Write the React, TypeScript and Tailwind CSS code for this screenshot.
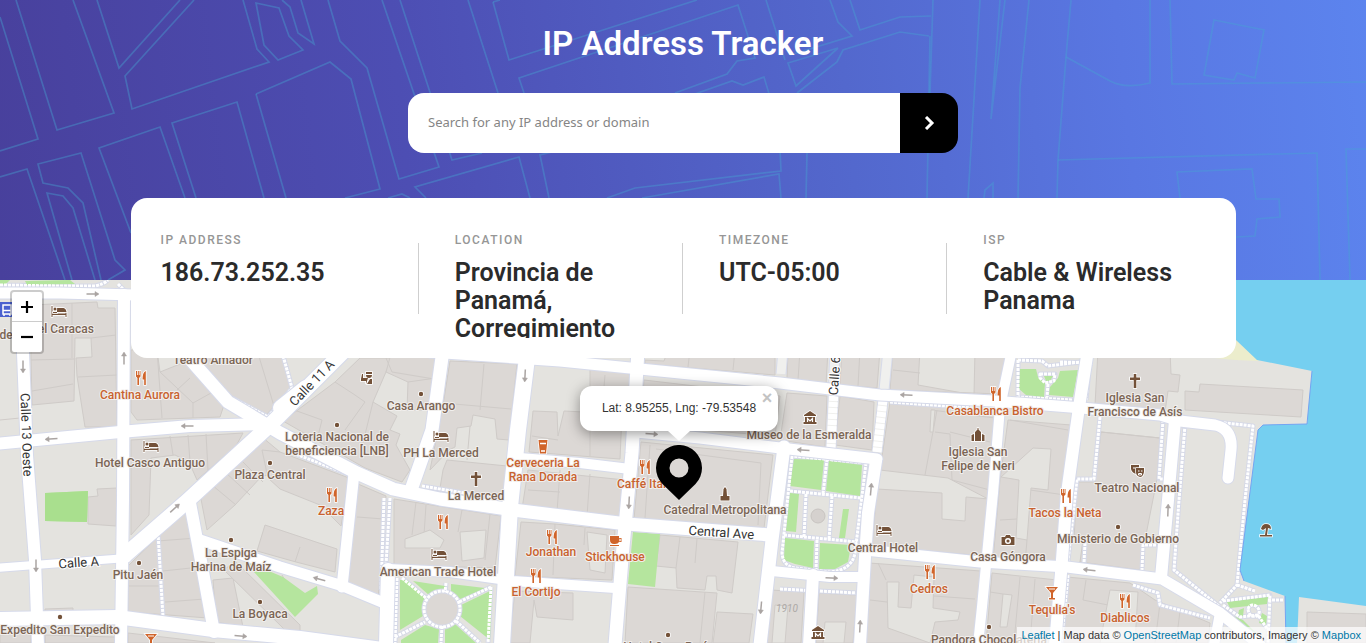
import type { ReactNode } from "react";

const STREET_PATTERN = [
  "M0,17 38,139 0,151",
  "M16,0 57,130 114,113 73,0",
  "M97,0 119,68 180,0",
  "M194,0 125,76 132,109 269,62 257,49 243,0",
  "M256,3 279,8 289,36 303,50 278,60 264,45Z",
  "M282,0 290,7 298,33 314,44 301,0",
  "M382,0 439,167 399,179 367,68 340,41 328,0",
  "M400,0 452,160 482,153",
  "M256,94 330,62 351,79 380,189 345,198",
  "M256,94 286,198",
  "M0,177 27,169 65,280",
  "M101,280 83,203 68,188 43,183 38,164 81,153 115,260 125,270 108,280",
  "M95,280 73,208 63,196 47,193 72,280",
  "M185,198 160,127 99,148 131,233",
  "M196,198 172,123 237,102 264,198",
  "M468,0 498,93",
  "M493,2 509,60 697,0",
  "M493,2 500,0",
  "M524,93 519,78 738,5 755,58 737,61 727,74 675,93",
  "M675,101 732,81 743,85 764,77 770,97",
  "M388,198 402,194 410,198",
  "M426,198 415,187 519,157 530,198",
  "M549,198 540,155 560,150",
  "M607,198 635,188 781,171 780,150",
  "M642,198 779,174 781,198",
  "M766,0 785,60",
  "M788,63 838,48 796,86Z",
  "M797,93 837,62 843,50 900,32 929,36",
  "M830,0 838,22 852,36 790,55",
  "M850,0 860,30 900,17 931,16",
  "M807,153 806,198",
  "M933,0 930,93",
  "M930,36 927,198",
  "M980,0 968,198",
  "M1000,0 991,119 1005,0",
  "M1029,0 1020,88 1018,198",
  "M1071,0 1066,57 1058,160 1057,198",
  "M1066,57 1110,81 Q1125,89 1150,83 L1150,0",
  "M1170,0 1172,84 1366,82",
  "M1214,20 1264,30 1255,78 1237,73 1234,80 1204,75Z",
  "M1058,160 1317,153 1320,280",
  "M1180,198 1177,172 1252,169 1256,199 1279,199 1280,217 1257,219 1255,236 1236,237",
  "M1366,149 1346,149 1350,280",
  "M984,198 985,190 993,183 993,198",
];

const BUILDINGS = [
  "31,305 97,302 98,308 115,308 117,427 85,427 77,376 76,358 92,357 91,338 75,338 74,401 32,405 31,360",
  "131,350 157,350 160,372 185,362 225,402 220,417 137,420 131,412",
  "199,364 205,350 282,350 292,388 265,416 228,396",
  "131,440 243,433 236,446 197,480 189,462 175,455 151,458 149,515 131,535",
  "128,566 187,508 199,560 208,618 128,612",
  "200,494 252,441 262,437 280,452 300,470 262,476 235,505 207,530",
  "265,525 337,549 335,572 296,562 257,551",
  "262,450 280,452 349,478 341,526 320,505 280,489 268,478",
  "213,580 233,578 243,627 216,622",
  "224,570 235,561 300,625 300,632 285,630",
  "88,497 98,496 97,489 117,488 116,526 88,524",
  "45,609 73,608 73,612 45,612",
  "45,635 115,637 115,643 45,643",
  "0,635 31,632 31,643 0,643",
  "128,633 215,643 128,643",
  "283,421 335,382 360,358 392,358 373,402 397,416 390,430 400,434 396,445 410,470 402,482 365,468",
  "392,350 438,358 434,410 407,410 408,382 386,372",
  "450,361 517,364 509,440 497,439 495,419 473,415 471,426 457,428 455,447 449,450 430,470 443,405",
  "447,460 507,466 503,500 440,488 443,470",
  "358,484 386,496 378,600 347,584",
  "394,499 501,516 495,568 394,565",
  "533,411 557,412 558,436 564,411 622,414 620,459 529,452",
  "528,470 625,480 622,521 522,509",
  "521,522 555,524 615,530 612,580 515,576",
  "515,591 573,593 573,620 537,617 534,600 530,643 509,643",
  "590,369 631,374 626,404 590,400",
  "644,380 780,396 775,436 640,425",
  "645,350 775,350 775,375 645,364",
  "641,442 773,455 764,528 634,519",
  "660,535 738,542 732,593 717,590 716,576 707,576 705,590 677,588 676,568 656,566",
  "628,587 717,593 712,643 625,643",
  "717,612 753,614 749,643 713,643",
  "771,590 804,592 801,643 764,643",
  "819,593 857,595 853,643 816,643",
  "788,350 828,350 826,385 787,378",
  "842,350 880,350 877,388 840,385",
  "893,350 920,350 918,385 974,395 975,350 1006,350 1000,394 890,390",
  "787,393 827,396 825,447 780,440",
  "840,396 874,402 872,450 835,445",
  "890,402 995,410 990,500 948,478 880,470",
  "877,489 942,493 942,519 965,521 966,497 989,499 984,556 872,546",
  "869,563 981,571 973,643 866,643",
  "1008,420 1071,425 1065,565 993,560 1000,480",
  "992,573 1057,580 1053,643 986,643",
  "1098,350 1170,350 1171,374 1180,375 1178,392 1168,391 1165,412 1095,405",
  "1185,391 1199,392 1200,384 1303,390 1301,417 1185,410",
  "1101,432 1160,438 1157,479 1145,540 1140,570 1080,562 1083,540 1074,540 1077,482 1095,482",
  "1067,577 1130,583 1155,600 1210,623 1208,643 1062,643",
  "1307,612 1366,614 1366,643 1307,643",
];

const COURTYARDS = [
  "405,539 430,530 444,540 440,548 405,548",
  "460,532 486,530 484,558 462,561",
  "587,532 607,535 605,573 590,570",
  "887,582 899,582 898,607 911,608 914,575 934,577 933,608 960,612 958,620 935,622 930,643 888,628",
  "1033,448 1051,449 1048,490 1031,488 1027,540 1016,538 1019,480 1001,477",
  "1003,594 1012,595 1007,627 1000,627",
  "1110,590 1138,592 1135,643 1100,643",
  "931,410 935,410 933,432 930,432",
  "775,605 788,606 785,643 772,643",
  "825,622 846,622 844,643 823,643",
  "643,350 668,350 664,361 643,360",
];

const BUILDING_EDGES =
  "M72,303V358 M31,360 74,359 M78,377 117,375 M91,338 116,335 M32,391 73,384 M157,350 162,418 M160,372 193,403 220,388 M193,403V418 M177,390 190,378 M257,350 274,406 M170,436 173,455 M188,435 190,462 M206,434 208,470 M158,541 196,538 M163,571 200,567 M128,586H163 M165,602 205,599 M212,485 236,505 M225,472 250,495 M240,459 263,482 M335,382 355,395 365,402 345,430 M373,402 360,455 M283,406 322,420 317,440 M408,382 436,378 M386,358 392,372 440,380 M484,364 480,410 M443,403 511,409 M470,426 467,460 M357,517 384,519 M426,505 424,535 M462,510 458,532 M490,514 485,560 M416,502 412,535 M532,436 558,440 M590,412V456 M560,470 557,512 M590,474 587,516 M528,490 560,492 M555,524 553,575 M585,528 584,545 M605,375 603,400 M590,400 625,403 M650,445 645,518 M656,449 761,463 758,525 M680,537 676,568 M697,539 695,563 M705,592 700,643 M690,350 688,367 M735,350 733,370 M773,396 770,430 M800,350 798,380 M860,350 858,386 M893,370 920,373 M937,410 925,475 M950,432 990,442 M935,432 950,434 952,480 990,490 M931,410 995,418 M870,600 887,602 M878,563 886,580 M934,596 975,599 M1010,420 1068,430 M1000,520 1017,519 M1030,490 1065,495 M1027,540 1025,563 M1020,577 1014,643 M1035,579 1030,643 M1003,594 990,592 M1101,432 1160,438 M1086,580 1083,600 1108,605 M1160,603 1155,643 M1180,611 1176,643 M45,635V643 M0,420 20,418 M300,547 295,562 M282,575 290,590";

const PARKS = [
  "45,493 88,491 87,522 45,521",
  "243,560 283,577 305,593 317,586 318,594 295,617",
  "633,532 660,534 655,587 628,584",
  "400,580 407,580 425,598 423,616 400,630",
  "413,581 445,586 445,591 430,596",
  "451,584 485,588 460,599 451,592",
  "492,590 490,640 460,616 461,605",
  "401,640 425,625 439,629 438,643 401,643",
  "445,629 455,624 476,643 445,643",
  "794,459 824,460 821,490 790,486",
  "829,461 862,465 860,496 826,491",
  "790,493 799,494 796,532 786,531",
  "843,509 849,509 845,538 839,538",
  "785,538 814,541 813,568 795,564 784,560",
  "820,543 851,545 848,562 835,569 819,569",
  "1020,369 1036,369 1038,377 1045,383 1044,397 1026,395 1019,389",
  "1050,387 1058,378 1060,371 1078,370 1073,397 1049,395",
  "1044,376 1053,376 1050,381 1046,381",
  "1227,602 1268,597 1267,604 1230,608",
  "1239,610 1244,608 1243,616 1238,615",
  "1231,615 1243,620 1266,643 1250,643",
  "1262,613 1267,616 1266,625 1259,623",
  "25,281 70,280 75,284 27,285",
  "0,280 10,280 6,284 0,285",
];

const ROADS: { d: string; w: number }[] = [
  { d: "M20,296 23,353 27,455 35,560 38,645", w: 12 },
  { d: "M-5,293 60,293 135,295", w: 11 },
  { d: "M124,295 123,500 121,645", w: 12 },
  { d: "M-5,444 120,432 190,426 268,424", w: 12 },
  { d: "M124,556 185,503 270,425 345,350", w: 15 },
  { d: "M182,350 228,402 280,433 357,473 393,489 440,499 513,510 627,524 770,535", w: 13 },
  { d: "M190,503 199,550 214,632", w: 12 },
  { d: "M200,540 280,567 343,586 384,603", w: 11 },
  { d: "M-5,619 117,617 213,630 300,638 390,650", w: 14 },
  { d: "M-5,568 127,558", w: 8 },
  { d: "M443,350 432,430 411,490", w: 13 },
  { d: "M528,350 518,430 510,507 502,645", w: 16 },
  { d: "M354,473 348,530 342,587", w: 11 },
  { d: "M388,570 386,645", w: 14 },
  { d: "M388,569 450,572 513,581 615,588", w: 10 },
  { d: "M520,458 580,463 630,469", w: 10 },
  { d: "M638,350 632,453 623,547 615,645", w: 13 },
  { d: "M430,352 560,361 640,369 780,383 880,395 993,401 1070,407 1160,415 1180,421 1215,425 Q1233,429 1231,450 L1228,478", w: 11 },
  { d: "M636,432 700,438 780,448 877,459", w: 11 },
  { d: "M784,447 772,540 760,645", w: 13 },
  { d: "M876,461 868,513 865,557 860,645", w: 12 },
  { d: "M813,575 809,645", w: 12 },
  { d: "M772,571 830,577 862,577", w: 10 },
  { d: "M865,550 980,562 1067,567 1162,579 1220,613 1260,645", w: 11 },
  { d: "M1012,350 1000,407 993,493 982,607 978,645", w: 10 },
  { d: "M1088,350 1079,407 1067,493 1061,573 1055,645", w: 12 },
  { d: "M1175,420 1168,500 1161,578", w: 12 },
  { d: "M1220,613 1214,645", w: 10 },
  { d: "M281,408 306,388", w: 16 },
];

const PALE_STREETS = ["M835,350 831,448", "M888,350 883,400 877,452", "M783,350 781,374"];

const FOOTWAYS = [
  "M0,285 60,286 95,286 Q104,284 108,280",
  "M118,284 130,296",
  "M1185,425 1179,500 1174,570 1220,607",
  "M1180,418 1253,426 1245,500 1237,585 1220,603",
  "M1237,585 1255,591",
  "M1100,417 1094,479 1077,479 1067,570",
  "M1163,420 1159,479 1166,479",
  "M1085,543 1084,563",
  "M1160,545 1143,545 1142,570",
  "M1133,585 1158,593 1160,605 1210,618",
  "M1068,575 1061,645",
  "M1060,362 1093,363",
  "M1091,350 1086,400",
  "M792,456 782,553 Q783,566 795,568 L830,572 Q852,570 855,553 L866,463Z",
  "M790,491 861,498",
  "M784,535 857,542",
  "M827,459 823,494",
  "M806,494 804,537",
  "M832,496 829,540",
  "M817,540 816,571",
  "M780,589 858,593",
  "M770,540 764,590",
  "M158,533 163,617",
  "M390,498 386,565 382,595",
  "M384,498 381,590",
  "M422,486 500,499",
  "M285,450 348,474",
  "M282,352 292,388 268,417 232,398",
  "M890,402 975,408",
  "M1018,360 1018,397 1073,400",
  "M1018,360 1042,361 1048,366 1080,362",
  "M1040,374 1055,374 1054,381 1045,383 1040,378Z",
  "M1048,384 1047,397",
  "M397,578 395,643",
  "M402,578 426,598",
  "M446,583 445,592",
  "M491,587 459,602",
  "M395,637 425,622",
  "M442,626 441,643",
  "M456,621 480,643",
  "M491,587 488,643",
  "M1223,601 1270,595 1268,643",
  "M1223,605 1240,617 1258,615 1268,630",
  "M1248,609 Q1250,603 1256,606 Q1262,611 1257,616 Q1249,618 1248,609Z",
  "M1268,600 1283,600",
  "M785,455 773,532",
];

type Place = {
  x: number;
  y: number;
  lines: string[];
  tone?: "food";
  anchor?: "start" | "middle" | "end";
};

const PLACES: Place[] = [
  { x: 140, y: 399, lines: ["Cantina Aurora"], tone: "food" },
  { x: 150, y: 467, lines: ["Hotel Casco Antiguo"] },
  { x: 94, y: 333, lines: ["Hotel Caracas"], anchor: "end" },
  { x: -7, y: 339, lines: ["ades"], anchor: "start" },
  { x: 213, y: 364, lines: ["Teatro Amador"] },
  { x: 421, y: 410, lines: ["Casa Arango"] },
  { x: 337, y: 441, lines: ["Loteria Nacional de", "beneficiencia [LNB]"] },
  { x: 441, y: 457, lines: ["PH La Merced"] },
  { x: 476, y: 500, lines: ["La Merced"] },
  { x: 270, y: 479, lines: ["Plaza Central"] },
  { x: 331, y: 515, lines: ["Zaza"], tone: "food" },
  { x: 543, y: 467, lines: ["Cerveceria La", "Rana Dorada"], tone: "food" },
  { x: 617, y: 488, lines: ["Caffé Italia"], tone: "food", anchor: "start" },
  { x: 725, y: 514, lines: ["Catedral Metropolitana"] },
  { x: 809, y: 439, lines: ["Museo de la Esmeralda"] },
  { x: 995, y: 415, lines: ["Casablanca Bistro"], tone: "food" },
  { x: 978, y: 456, lines: ["Iglesia San", "Felipe de Neri"] },
  { x: 1135, y: 402, lines: ["Iglesia San", "Francisco de Asís"] },
  { x: 1137, y: 492, lines: ["Teatro Nacional"] },
  { x: 1065, y: 517, lines: ["Tacos la Neta"], tone: "food" },
  { x: 1118, y: 543, lines: ["Ministerio de Gobierno"] },
  { x: 1008, y: 561, lines: ["Casa Góngora"] },
  { x: 883, y: 552, lines: ["Central Hotel"] },
  { x: 929, y: 593, lines: ["Cedros"], tone: "food" },
  { x: 1052, y: 614, lines: ["Tequlia's"], tone: "food" },
  { x: 1125, y: 622, lines: ["Diablicos"], tone: "food" },
  { x: 989, y: 644, lines: ["Pandora Chocolatería"] },
  { x: 231, y: 557, lines: ["La Espiga", "Harina de Maíz"] },
  { x: 260, y: 618, lines: ["La Boyaca"] },
  { x: 138, y: 579, lines: ["Pitu Jaén"] },
  { x: 60, y: 634, lines: ["Expedito San Expedito"] },
  { x: 438, y: 576, lines: ["American Trade Hotel"] },
  { x: 551, y: 556, lines: ["Jonathan"], tone: "food" },
  { x: 536, y: 596, lines: ["El Cortijo"], tone: "food" },
  { x: 615, y: 561, lines: ["Stickhouse"], tone: "food" },
  { x: 668, y: 651, lines: ["Hotel Casa París"] },
];

const STREET_NAMES = [
  { x: 22, y: 435, turn: 88, name: "Calle 13 Oeste" },
  { x: 79, y: 567, turn: -4, name: "Calle A" },
  { x: 315, y: 386, turn: -46, name: "Calle 11 A" },
  { x: 839, y: 376, turn: -86, name: "Calle 6" },
  { x: 721, y: 537, turn: 4, name: "Central Ave" },
];

const ARROWS = [
  [93, 294, 0], [124, 358, -90], [23, 367, 90], [187, 426, 180], [51, 439, 176],
  [175, 508, -42], [36, 566, 90], [241, 636, 5], [319, 579, 195], [525, 376, 93],
  [652, 434, 4], [629, 503, 93], [761, 608, 95], [803, 450, 184], [906, 395, 183],
  [871, 489, -85], [832, 578, 3], [860, 626, -87], [1168, 510, -88], [1089, 570, 186],
];

const DOTS = [
  [337, 425], [421, 394], [270, 463], [231, 540], [139, 563], [60, 617],
  [260, 602], [1118, 527], [989, 627], [668, 635],
];

const RESTAURANTS = [
  [141, 378], [332, 495], [443, 522], [552, 537], [536, 576], [645, 467],
  [996, 394], [1066, 496], [930, 572], [1125, 601],
];

const HOTELS = [[59, 312], [151, 447], [441, 437], [439, 555], [884, 531]];
const MUSEUMS = [[810, 418], [818, 633]];
const CROSSES = [[476, 479], [1135, 381]];
const BARS = [[1052, 593], [151, 640]];

function Glyph({ at, children }: { at: number[]; children: ReactNode }) {
  return <g transform={`translate(${at[0]} ${at[1]})`}>{children}</g>;
}

function CityMap() {
  return (
    <svg
      className="absolute inset-0 h-full w-full"
      viewBox="0 280 1366 363"
      preserveAspectRatio="xMidYMid slice"
      role="img"
      aria-label="Street map"
    >
      <rect x="0" y="280" width="1366" height="363" fill="#e4e3df" />
      <g fill="#dcd8d5" stroke="#cfcbc8" strokeWidth="1">
        {BUILDINGS.map((p) => <polygon key={p} points={p} />)}
      </g>
      <path d={BUILDING_EDGES} fill="none" stroke="#cfcbc8" />
      <g fill="#e4e3df" stroke="#cfcbc8" strokeWidth="1">
        {COURTYARDS.map((p) => <polygon key={p} points={p} />)}
      </g>
      <g fill="none" strokeLinejoin="round">
        <g stroke="#d6daea" strokeWidth="11">
          {PALE_STREETS.map((d) => <path key={d} d={d} />)}
        </g>
        <g stroke="#f0f0ee" strokeWidth="9">
          {PALE_STREETS.map((d) => <path key={d} d={d} />)}
        </g>
        <path d="M834,390 831,448 M883,400 877,452" stroke="#ffffff" strokeWidth="9" strokeDasharray="5 1" />
        <circle cx="818" cy="516" r="7" fill="#d5d1ce" stroke="#c8c4c1" />
        <g stroke="#d6d9e7" strokeWidth="5">
          {FOOTWAYS.map((d) => <path key={d} d={d} />)}
        </g>
      </g>
      <g fill="#b5e59e">
        {PARKS.map((p) => <polygon key={p} points={p} />)}
      </g>
      <polygon points="45,493 88,491 87,522 45,521" fill="#a9df8e" />
      <g fill="none" strokeLinejoin="round">
        <circle cx="442" cy="609" r="18" fill="#dcd8d5" stroke="#d6d9e7" strokeWidth="5" />
        <circle cx="442" cy="609" r="18" stroke="#fff" strokeWidth="3" strokeDasharray="3 1" />
        <g stroke="#ffffff" strokeWidth="3" strokeDasharray="3 1">
          {FOOTWAYS.map((d) => <path key={d} d={d} />)}
        </g>
        <g stroke="#d6daea" strokeLinecap="round">
          {ROADS.map((r) => <path key={r.d} d={r.d} strokeWidth={r.w + 2} />)}
        </g>
        <g stroke="#ffffff" strokeLinecap="round">
          {ROADS.map((r) => <path key={r.d} d={r.d} strokeWidth={r.w} />)}
        </g>
      </g>
      <polygon points="1215,340 1236,340 1259,361 1235,360 1215,358" fill="#ecedcc" />
      <path
        d="M1200,280 1236,340 1257,360 1312,371 1307,424 1263,425 1258,430 1240,570 1244,581 1285,596 1286,643 1297,643 1299,597 1366,606 1366,280Z"
        fill="#75cff0"
      />
      <path d="M1312,371 1307,424 1263,425 1258,430 1240,570 1244,581 M1285,596 1286,643" fill="none" stroke="#74a4f2" />

      <g stroke="#aaa4a2" strokeWidth="1.5" fill="#aaa4a2">
        {ARROWS.map(([x, y, turn]) => (
          <g key={`${x}-${y}`} transform={`translate(${x} ${y}) rotate(${turn})`}>
            <path d="M-6.500,0H5" />
            <path d="M2,-2.500 6,0 2,2.500Z" strokeWidth="0.500" />
          </g>
        ))}
      </g>

      <g fill="#735138" stroke="#fff" strokeWidth="1.500" paintOrder="stroke">
        {DOTS.map((p) => <circle key={p.join()} cx={p[0]} cy={p[1]} r="2.200" />)}
        {HOTELS.map((p) => (
          <Glyph key={p.join()} at={p}>
            <path d="M-7.500,-6H-6.500V1.500H6.500V-1Q6.500,-2 7.500,-1V5H6.500V3H-6.500V5H-7.500Z" />
            <path d="M-2,-4H4.500Q7,-3.500 7.500,0H-2Z M-6,0H-2V1H-6Z" />
            <circle cx="-4" cy="-3" r="1.500" />
          </Glyph>
        ))}
        {MUSEUMS.map((p) => (
          <Glyph key={p.join()} at={p}>
            <path d="M0,-7 6,-3V-2H-6V-3Z M-5,-1H5V4H6.500V6H-6.500V4H-5Z" />
            <path d="M-2.500,4V0.500L0,3 2.500,0.500V4" fill="none" stroke="#fff" strokeWidth="1.200" />
          </Glyph>
        ))}
        {CROSSES.map((p) => (
          <Glyph key={p.join()} at={p}>
            <path d="M-1.300,-7H1.300V-3.500H5V-1H1.300V7H-1.300V-1H-5V-3.500H-1.300Z" />
          </Glyph>
        ))}
        <Glyph at={[978, 435]}>
          <path d="M-0.500,-7H0.500V-5.500L3,-3V6H-3V-3L-0.500,-5.500Z M-6.500,0L-4,-1V6H-6.500Z M6.500,0L4,-1V6H6.500Z" />
        </Glyph>
        <Glyph at={[725, 494]}>
          <path d="M0,-7 1.500,-5 2,2H4.500V6.500H-4.500V2H-2L-1.500,-5Z" />
        </Glyph>
        <Glyph at={[1008, 540]}>
          <path d="M-6.500,-3H-3L-2,-5H2L3,-3H6.500V5H-6.500Z" />
          <circle cx="0" cy="1" r="2.300" fill="none" stroke="#fff" strokeWidth="1.500" />
        </Glyph>
        <Glyph at={[367, 378]}>
          <path d="M-1,-6H5V-4H-1Z M-1,-3H5Q5,0 2,0 Q-1,0 -1,-3Z M-5,-4H-4V0H1L-1,6V3H-6V1Z M3,1H5V6H0Z" />
        </Glyph>
        <Glyph at={[1137, 471]}>
          <path d="M-6,-6H2V-2Q2,1 -1,3Q-5,2 -6,-2Z" />
          <path d="M-1,-3H7V1Q6,6 3,6Q-1,5 -1,1Z" />
          <path d="M1,0H2.500M4,0H5.500M1.500,2.500H4.500V4H1.500Z M-4,-3H-2" fill="none" stroke="#fff" strokeWidth="1" />
        </Glyph>
        <Glyph at={[1266, 530]}>
          <path d="M-5,-1Q-4,-6 0,-6Q5,-6 5,-1L2,-2 1,5H-1L0,-2L-3,0Z M-6,5H6V6.500H-6Z" />
        </Glyph>
      </g>

      <g fill="#d0642a" stroke="#fff" strokeWidth="1.500" paintOrder="stroke">
        {RESTAURANTS.map((p) => (
          <Glyph key={p.join()} at={p}>
            <path d="M-5,-7H-4V-3H-3.200V-7H-2.200V-3H-1.400V-7H-0.500V-1.500L-2,0V7H-3.600V0L-5,-1.500Z M4.800,-7V7H3.200V1.500H1.500Q1.500,-6 4.800,-7Z" />
          </Glyph>
        ))}
        {BARS.map((p) => (
          <Glyph key={p.join()} at={p}>
            <path d="M-6,-6H6L1,0V5H3V6.500H-3V5H-1V0Z" />
            <path d="M-3,-4H3" stroke="#fff" strokeWidth="1" />
          </Glyph>
        ))}
        <Glyph at={[543, 447]}>
          <path d="M-4.500,-7H4.500L3,6.500H-3Z" />
          <path d="M-3,-3.500H3M-2,4H2" stroke="#fff" strokeWidth="1.300" />
        </Glyph>
        <Glyph at={[615, 541]}>
          <path d="M-5,-5H4V-3H6.500V1H4Q3,3 0,3H-1Q-5,3 -5,-1Z M-5,4H4V5H-5Z" />
          <path d="M4,-1.700H5.500V-0.300H4" fill="none" strokeWidth="0.800" />
        </Glyph>
      </g>
      <g>
        <rect x="-6" y="302" width="21" height="15" rx="2" fill="#4a61cf" />
        <path d="M3,305H11V314H3Z M4,314V316 M10,314V316 M3,310.500H11" fill="none" stroke="#fff" strokeWidth="1.500" />
      </g>

      <g
        className="font-[Roboto,'Noto_Sans',sans-serif] text-[12px] font-medium"
        stroke="#f1efed"
        strokeWidth="2"
        strokeLinejoin="round"
        paintOrder="stroke"
      >
        {PLACES.map((p) => (
          <text
            key={p.lines.join() + p.x}
            textAnchor={p.anchor ?? "middle"}
            fill={p.tone === "food" ? "#c8622f" : "#7b6555"}
          >
            {p.lines.map((line, i) => (
              <tspan key={line} x={p.x} y={p.y + i * 14}>{line}</tspan>
            ))}
          </text>
        ))}
      </g>
      <text x="787" y="612" textAnchor="middle" fill="#aca8a6" className="font-[Roboto,sans-serif] text-[10px] italic">
        1910
      </text>
      <g
        className="font-[Roboto,'Noto_Sans',sans-serif] text-[13px]"
        fill="#333333"
        stroke="#fff"
        strokeWidth="2"
        paintOrder="stroke"
        textAnchor="middle"
      >
        {STREET_NAMES.map((s) => (
          <text key={s.name} transform={`translate(${s.x} ${s.y}) rotate(${s.turn})`}>{s.name}</text>
        ))}
      </g>
    </svg>
  );
}

const DETAILS = [
  { label: "IP Address", value: "186.73.252.35" },
  { label: "Location", value: "Provincia de Panamá, Corregimiento San Felipe" },
  { label: "Timezone", value: "UTC-05:00" },
  { label: "ISP", value: "Cable & Wireless Panama" },
];

function DetailsCard() {
  return (
    <dl className="relative z-20 mx-5 -mb-20 mt-[45px] grid h-40 w-full max-w-[1105px] grid-cols-4 rounded-2xl bg-white px-6 pb-5 pt-[35px] font-[Roboto,sans-serif]">
      {DETAILS.map((item, i) => (
        <div key={item.label} className="flex min-w-0 overflow-hidden">
          <div className={i === 0 ? "min-w-0 flex-1 pl-1.5" : "min-w-0 flex-1 pl-9 pr-6"}>
            <dt className="text-xs leading-[14px] font-medium tracking-[1.5px] text-[#969696] uppercase">{item.label}</dt>
            <dd className="mt-3 text-[25px] leading-7 font-semibold text-[#2b2b2b]">{item.value}</dd>
          </div>
          {i < DETAILS.length - 1 && <span className="mt-2.5 h-[71px] w-px bg-[#cfcfcf]" aria-hidden="true" />}
        </div>
      ))}
    </dl>
  );
}

function LocationMarker() {
  return (
    <div className="absolute top-1/2 left-1/2 z-10 flex w-[198px] -translate-x-[103px] -translate-y-[76px] flex-col items-center">
      <div className="relative w-full rounded-xl bg-white px-5 py-[13px] text-center text-xs leading-[19px] whitespace-nowrap text-[#333] shadow-[0_3px_14px_rgba(0,0,0,0.4)]">
        Lat: 8.95255, Lng: -79.53548
        <button type="button" aria-label="Close popup" className="absolute top-1 right-0.5 h-4 w-[18px] text-lg leading-4 font-bold text-[#c3c3c3]">
          ×
        </button>
      </div>
      <svg className="relative h-2.5 w-6" viewBox="0 0 24 10" aria-hidden="true">
        <path d="M1,0H23L12,10Z" fill="#fff" />
      </svg>
      <svg className="mt-1 h-[55px] w-[46px]" viewBox="0 0 46 55" role="img" aria-label="Location pin">
        <path fillRule="evenodd" d="M23,55 6.500,39A23,23 0 1 1 39.500,39Z M23,13.500A9.500,9.500 0 1 0 23,32.500A9.500,9.500 0 1 0 23,13.500Z" />
      </svg>
    </div>
  );
}

export default function App() {
  return (
    <div className="flex h-screen min-h-[600px] flex-col overflow-hidden">
      <header className="relative flex h-[280px] shrink-0 flex-col items-center bg-[linear-gradient(84deg,#48409c_0%,#4d4eb3_30%,#5368cd_62%,#5977e2_82%,#5c84ee_100%)]">
        <svg className="absolute inset-0 h-full w-full" viewBox="0 0 1366 280" preserveAspectRatio="xMidYMid slice" aria-hidden="true">
          <g fill="none" stroke="#47a5d3" strokeOpacity="0.4" strokeWidth="1.700">
            {STREET_PATTERN.map((d) => <path key={d} d={d} />)}
          </g>
        </svg>
        <h1 className="relative pt-6 font-[Roboto,sans-serif] text-[33px] leading-10 font-semibold text-white">IP Address Tracker</h1>
        <form className="relative mt-[29px] flex h-[60px] w-full max-w-[550px] shrink-0 overflow-hidden rounded-2xl" onSubmit={(e) => e.preventDefault()}>
          <input
            type="text"
            aria-label="IP address or domain"
            placeholder="Search for any IP address or domain"
            className="min-w-0 flex-1 bg-white px-5 font-['Noto_Sans',sans-serif] text-[13px] text-[#2b2b2b] outline-none placeholder:text-[#858585]"
          />
          <button type="submit" aria-label="Search" className="flex w-[58px] items-center justify-center bg-black">
            <svg className="h-3.5 w-[11px]" viewBox="0 0 11 14" fill="none" stroke="#fff" strokeWidth="3" aria-hidden="true">
              <path d="M2,1 8,7 2,13" />
            </svg>
          </button>
        </form>
        <DetailsCard />
      </header>
      <main className="relative flex-1 overflow-hidden font-['Liberation_Sans',Arial,sans-serif]">
        <CityMap />
        <LocationMarker />
        <div className="absolute top-2.5 left-2.5 z-10 flex flex-col rounded-sm border-2 border-black/20 bg-white bg-clip-padding">
          <button type="button" aria-label="Zoom in" className="flex h-[30px] w-[30px] items-center justify-center border-b border-[#ccc]">
            <svg className="h-3.5 w-3.5" viewBox="0 0 14 14" stroke="#000" strokeWidth="2.200" aria-hidden="true"><path d="M1,7H13M7,1V13" /></svg>
          </button>
          <button type="button" aria-label="Zoom out" className="flex h-[30px] w-[30px] items-center justify-center">
            <svg className="h-3.5 w-3.5" viewBox="0 0 14 14" stroke="#000" strokeWidth="2.200" aria-hidden="true"><path d="M1,7H13" /></svg>
          </button>
        </div>
        <div className="absolute right-0 bottom-0 z-10 bg-white/70 px-[5px] text-[11px] leading-4 text-[#333]">
          <a href="https://leafletjs.com" className="text-[#0078a8]">Leaflet</a> | Map data ©{" "}
          <a href="https://www.openstreetmap.org/" className="text-[#0078a8]">OpenStreetMap</a> contributors, Imagery ©{" "}
          <a href="https://www.mapbox.com/" className="text-[#0078a8]">Mapbox</a>
        </div>
      </main>
    </div>
  );
}
